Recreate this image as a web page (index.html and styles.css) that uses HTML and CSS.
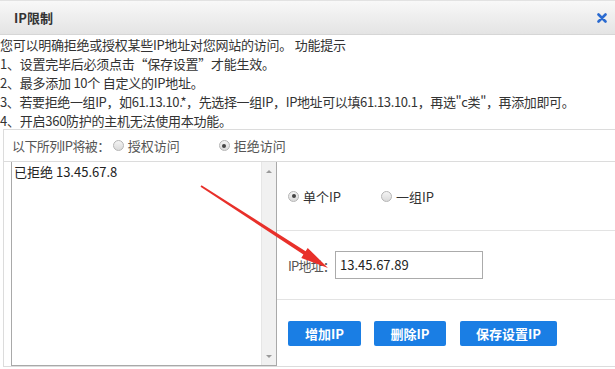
FILE: index.html
```html
<!DOCTYPE html>
<html lang="zh-CN">
<head>
<meta charset="utf-8">
<title>IP限制</title>
<link rel="stylesheet" href="styles.css">
</head>
<body>
<div class="dialog">
  <div class="titlebar">
    <span class="title">IP限制</span>
    <svg class="close" width="10" height="10" viewBox="0 0 10 10"><path d="M1.5 1.5 L8.5 8.5 M8.5 1.5 L1.5 8.5" stroke="#2a6ad0" stroke-width="2.6" stroke-linecap="round"/></svg>
  </div>
  <div class="notes">
    <p>您可以明确拒绝或授权某些IP地址对您网站的访问。 功能提示</p>
    <p>1、设置完毕后必须点击“保存设置”才能生效。</p>
    <p>2、最多添加 10个 自定义的IP地址。</p>
    <p class="long">3、若要拒绝一组IP，如61.13.10.*，先选择一组IP，IP地址可以填61.13.10.1，再选"c类"，再添加即可。</p>
    <p>4、开启360防护的主机无法使用本功能。</p>
  </div>
  <div class="panel">
    <div class="filter-row">
      <span class="muted lbl">以下所列IP将被：</span>
      <span class="radio first"></span><span class="muted opt">授权访问</span>
      <span class="radio checked gap"></span><span class="muted opt">拒绝访问</span>
    </div>
    <div class="content">
      <div class="listbox">
        <div class="items"><div class="item">已拒绝 13.45.67.8</div></div>
        <div class="scrollbar"><span class="up"></span><span class="down"></span></div>
      </div>
      <div class="side">
        <div class="section">
          <span class="radio checked"></span><span class="opt">单个IP</span>
          <span class="radio gap2"></span><span class="opt">一组IP</span>
        </div>
        <div class="section">
          <span class="label">IP地址：</span><span class="input">13.45.67.89</span>
        </div>
        <div class="section buttons">
          <span class="btn w1">增加IP</span>
          <span class="btn w2">删除IP</span>
          <span class="btn w3">保存设置IP</span>
        </div>
      </div>
    </div>
  </div>
</div>
<svg class="arrow" width="615" height="369" viewBox="0 0 615 369">
  <polygon points="201.5,185.2 305.6,251.2 307.7,247.9 328,268 301.3,257.9 303.4,254.6 200.5,186.8" fill="#e8302a"/>
</svg>
</body>
</html>
```

FILE: styles.css
```css
html, body {
  margin: 0;
  padding: 0;
  background: #fff;
}
body {
  width: 615px;
  height: 369px;
  overflow: hidden;
  position: relative;
  font-family: "Noto Sans CJK SC", "Microsoft YaHei", sans-serif;
  font-size: 13px;
  color: #333;
}
.titlebar {
  border-top: 1px solid #e2e2e2;
  border-bottom: 1px solid #d6d6d6;
  background: linear-gradient(#f8f8f8, #e4e4e4);
  display: flex;
  align-items: center;
  justify-content: space-between;
  padding: 0 8px 0 14px;
  box-sizing: border-box;
  height: 35px;
}
.title {
  font-weight: bold;
  font-size: 13px;
  color: #333;
}
.close {
  display: block;
}
.notes {
  height: 94px;
}
.notes p {
  margin: 0;
  line-height: 19px;
  height: 19px;
  white-space: nowrap;
  letter-spacing: -0.25px;
}
.notes p.long {
  letter-spacing: -0.38px;
}
.panel {
  margin-left: 3px;
  border-top: 1px solid #dcdcdc;
  border-left: 1px solid #dcdcdc;
  border-bottom: 1px solid #dcdcdc;
  height: 238px;
  box-sizing: border-box;
  display: flex;
  flex-direction: column;
}
.filter-row {
  height: 31px;
  border-bottom: 1px solid #dcdcdc;
  display: flex;
  align-items: center;
  padding-left: 8px;
  flex-shrink: 0;
}
.muted {
  color: #555;
}
.lbl {
  letter-spacing: -0.6px;
}
.radio {
  display: inline-block;
  width: 11px;
  height: 11px;
  border-radius: 50%;
  border: 1px solid #b5b5b5;
  background: linear-gradient(#f4f4f4, #dadada);
  box-sizing: border-box;
  margin-left: 6px;
  margin-right: 4px;
  position: relative;
}
.radio.first {
  margin-left: 3px;
}
.radio.checked::after {
  content: "";
  position: absolute;
  left: 2.5px;
  top: 2.5px;
  width: 4px;
  height: 4px;
  border-radius: 50%;
  background: #444;
}
.radio.gap {
  margin-left: 39px;
}
.radio.gap2 {
  margin-left: 40px;
}
.content {
  flex: 1;
  display: flex;
}
.listbox {
  margin-left: 7px;
  width: 266px;
  border: 1px solid #a9a9a9;
  border-top: none;
  box-sizing: border-box;
  display: flex;
}
.items {
  flex: 1;
  padding: 0 0 0 2px;
}
.item {
  line-height: 18px;
  padding-top: 1px;
  color: #222;
}
.scrollbar {
  width: 14px;
  background: #f1f1f1;
  border-left: 1px solid #e6e6e6;
  position: relative;
}
.scrollbar .up, .scrollbar .down {
  position: absolute;
  left: 4px;
  width: 0;
  height: 0;
  border-left: 3px solid transparent;
  border-right: 3px solid transparent;
}
.scrollbar .up {
  top: 8px;
  border-bottom: 3px solid #9a9a9a;
}
.scrollbar .down {
  bottom: 7px;
  border-top: 3px solid #9a9a9a;
}
.side {
  flex: 1;
  display: flex;
  flex-direction: column;
}
.section {
  height: 68px;
  border-bottom: 1px solid #e3e3e3;
  display: flex;
  align-items: center;
  padding-left: 5px;
  flex-shrink: 0;
}
.section:last-child {
  border-bottom: none;
  flex: 1;
}
.section .radio:first-child {
  margin-left: 6px;
}
.label {
  margin-left: 6px;
  color: #555;
  letter-spacing: -0.8px;
}
.input {
  display: inline-block;
  width: 148px;
  height: 28px;
  line-height: 26px;
  border: 1px solid #ababab;
  box-sizing: border-box;
  padding-left: 4px;
  color: #222;
  margin-left: 0;
}
.buttons {
  padding-left: 11px;
  align-items: flex-start;
  padding-top: 21px;
  box-sizing: border-box;
}
.btn {
  display: inline-block;
  height: 25px;
  line-height: 25px;
  background: #1a7ee4;
  border-radius: 2px;
  color: #fff;
  font-weight: bold;
  text-align: center;
  font-size: 13px;
  margin-right: 13px;
}
.w1 { width: 73px; }
.w2 { width: 72px; margin-right: 14px; }
.w3 { width: 97px; }
.arrow {
  position: absolute;
  left: 0;
  top: 0;
  pointer-events: none;
}
```
